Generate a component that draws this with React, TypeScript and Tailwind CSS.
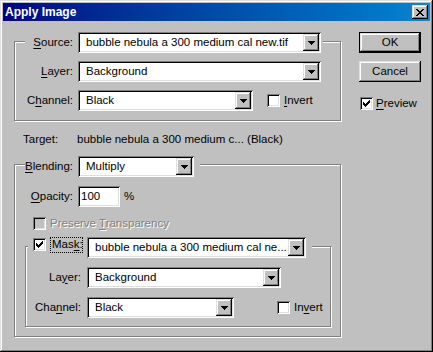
import type { ReactNode } from "react";

const RAISED =
  "shadow-[inset_-1px_-1px_#000,inset_1px_1px_#dfdfdf,inset_-2px_-2px_#808080,inset_2px_2px_#fff]";
const SUNKEN =
  "shadow-[inset_1px_1px_#808080,inset_-1px_-1px_#fff,inset_2px_2px_#000,inset_-2px_-2px_#dfdfdf]";
const ETCHED = "border border-[#808080] shadow-[inset_1px_1px_#fff,1px_1px_#fff]";

const CHECK = ["......#", ".....##", "#...###", "##.###.", "#####..", ".###...", "..#...."];
const CLOSE_X = ["##....##", ".##..##.", "..####..", "...##...", "..####..", ".##..##.", "##....##"];
const ARROW = ["#######", ".#####.", "..###..", "...#..."];

function Pixels({ rows, color = "#000" }: { rows: string[]; color?: string }) {
  const w = rows[0].length;
  const h = rows.length;
  return (
    <svg width={w} height={h} viewBox={`0 0 ${w} ${h}`} shapeRendering="crispEdges" className="block">
      {rows.flatMap((r, y) =>
        r.split("").map((c, x) => (c === "#" ? <rect key={`${x}-${y}`} x={x} y={y} width={1} height={1} fill={color} /> : null)),
      )}
    </svg>
  );
}

function U({ children }: { children: ReactNode }) {
  return <span className="underline decoration-1 underline-offset-[2px]">{children}</span>;
}

function Combo({ text, className }: { text: string; className: string }) {
  return (
    <div className={`flex h-[21px] shrink-0 items-center bg-white p-[2px] ${SUNKEN} ${className}`}>
      <span className="min-w-0 flex-1 overflow-hidden whitespace-nowrap pl-[6px]">{text}</span>
      <div className={`flex h-[17px] w-[16px] items-center justify-center bg-[#c0c0c0] pt-[1px] ${RAISED}`}>
        <Pixels rows={ARROW} />
      </div>
    </div>
  );
}

function Check({ checked, disabled, className = "" }: { checked?: boolean; disabled?: boolean; className?: string }) {
  return (
    <div
      className={`flex h-[13px] w-[13px] shrink-0 items-start justify-start p-[3px] ${disabled ? "bg-[#c0c0c0]" : "bg-white"} ${SUNKEN} ${className}`}
    >
      {checked && <Pixels rows={CHECK} />}
    </div>
  );
}

function Button({ children, isDefault }: { children: ReactNode; isDefault?: boolean }) {
  if (isDefault) {
    return (
      <div className="h-[21px] w-[62px] border border-black">
        <div className={`flex h-full w-full items-center justify-center bg-[#c0c0c0] ${RAISED}`}>{children}</div>
      </div>
    );
  }
  return (
    <div className={`flex h-[21px] w-[62px] items-center justify-center bg-[#c0c0c0] ${RAISED}`}>{children}</div>
  );
}

function TitleBar() {
  return (
    <div className="flex h-[18px] shrink-0 items-center bg-linear-to-r from-[#000080] to-[#1084d0] px-[2px]">
      <span className="text-[12px] font-bold text-white">Apply Image</span>
      <div className={`ml-auto flex h-[14px] w-[16px] items-center justify-center bg-[#c0c0c0] pl-[0px] ${RAISED}`}>
        <Pixels rows={CLOSE_X} />
      </div>
    </div>
  );
}

function SourceGroup() {
  return (
    <div className={`${ETCHED} pb-[9px]`}>
      <div className="-mt-[10px] ml-[10px] flex w-fit items-center bg-[#c0c0c0] pr-[2px]">
        <span className="w-[48px] text-right">
          <U>S</U>ource:
        </span>
        <Combo text="bubble nebula a 300 medium cal new.tif" className="ml-[5px] w-[243px]" />
      </div>
      <div className="ml-[10px] mt-[8px] flex items-center">
        <span className="w-[48px] text-right">
          <U>L</U>ayer:
        </span>
        <Combo text="Background" className="ml-[5px] w-[243px]" />
      </div>
      <div className="ml-[10px] mt-[8px] flex items-center">
        <span className="w-[48px] text-right">
          C<U>h</U>annel:
        </span>
        <Combo text="Black" className="ml-[5px] w-[175px]" />
        <Check className="ml-[14px]" />
        <span className="ml-[4px]">
          <U>I</U>nvert
        </span>
      </div>
    </div>
  );
}

function MaskGroup() {
  return (
    <div className={`${ETCHED} ml-[10px] mt-[16px] w-[306px] pb-[8px]`}>
      <div className="-mt-[10px] ml-[2px] flex w-fit items-start bg-[#c0c0c0] pl-[5px] pr-[6px]">
        <Check checked className="mt-[1px]" />
        <span className="ml-[4px] flex h-[16px] w-[33px] items-center border border-dotted border-black pl-[1px]">
          Mas<U>k</U>:
        </span>
        <Combo text="bubble nebula a 300 medium cal ne..." className="ml-[4px] w-[219px]" />
      </div>
      <div className="mt-[9px] flex items-center">
        <span className="w-[55px] text-right">
          La<U>y</U>er:
        </span>
        <Combo text="Background" className="ml-[6px] w-[194px]" />
      </div>
      <div className="mt-[9px] flex items-center">
        <span className="w-[55px] text-right">
          Cha<U>n</U>nel:
        </span>
        <Combo text="Black" className="ml-[6px] w-[147px]" />
        <Check className="ml-[43px]" />
        <span className="ml-[4px]">
          In<U>v</U>ert
        </span>
      </div>
    </div>
  );
}

function BlendingGroup() {
  return (
    <div className={`${ETCHED} mt-[18px] pb-[9px]`}>
      <div className="-mt-[9px] ml-[10px] flex w-fit items-center bg-[#c0c0c0] pr-[6px]">
        <span className="w-[48px] text-right">
          <U>B</U>lending:
        </span>
        <Combo text="Multiply" className="ml-[5px] w-[116px]" />
      </div>
      <div className="ml-[10px] mt-[9px] flex items-center">
        <span className="w-[48px] text-right">
          <U>O</U>pacity:
        </span>
        <div className={`ml-[5px] flex h-[21px] w-[42px] items-center bg-white pl-[3px] ${SUNKEN}`}>100</div>
        <span className="ml-[4px]">%</span>
      </div>
      <div className="ml-[18px] mt-[10px] flex h-[13px] items-center">
        <Check disabled />
        <span className="ml-[4px] text-[#808080] [text-shadow:1px_1px_0_#fff]">
          Preserve <U>T</U>ransparency
        </span>
      </div>
      <MaskGroup />
    </div>
  );
}

export default function App() {
  return (
    <div
      className={`flex h-[352px] w-[433px] flex-col bg-[#c0c0c0] p-[3px] font-['Liberation_Sans',Arial,sans-serif] text-[11.5px] leading-none text-black ${RAISED}`}
    >
      <TitleBar />
      <div className="flex">
        <div className="ml-[11px] mt-[20px] w-[327px] shrink-0">
          <SourceGroup />
          <div className="ml-[9px] mt-[12px] flex h-[13px] items-center">
            <span className="w-[54px]">Target:</span>
            <span>bubble nebula a 300 medium c... (Black)</span>
          </div>
          <BlendingGroup />
        </div>
        <div className="ml-[18px] mt-[11px] flex flex-col">
          <Button isDefault>OK</Button>
          <div className="mt-[8px]">
            <Button>Cancel</Button>
          </div>
          <div className="mt-[15px] flex items-center">
            <Check checked className="ml-[1px]" />
            <span className="ml-[3px]">
              <U>P</U>review
            </span>
          </div>
        </div>
      </div>
    </div>
  );
}
